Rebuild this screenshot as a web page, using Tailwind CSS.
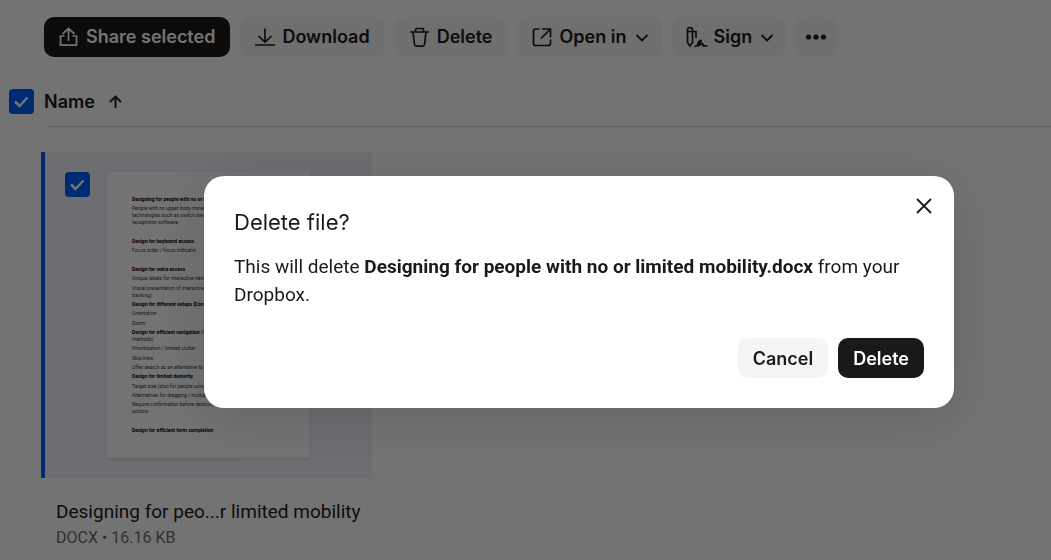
<!DOCTYPE html>
<html lang="en">
<head>
    <meta charset="UTF-8">
    <meta name="viewport" content="width=device-width, initial-scale=1.0">
    <title>Files - Dropbox</title>
    <script src="https://cdn.jsdelivr.net/npm/@tailwindcss/browser@4"></script>
</head>
<body class="bg-white font-['Roboto',sans-serif] text-[#1e1919] min-h-screen overflow-hidden">
    <!-- Toolbar -->
    <header class="flex gap-[10px] pt-[17px] pl-[44px] font-['Inter',sans-serif] text-[18px] leading-6 font-semibold whitespace-nowrap">
        <button class="flex items-center gap-[6px] h-10 pl-[14px] pr-[15px] rounded-[10px] bg-[#1a1918] text-white">
            <svg class="w-[22px] h-[22px]" viewBox="0 0 22 22" fill="none" stroke="currentColor" stroke-width="1.7">
                <path d="M6.500 10H2.500v9.200h16V10h-4M10.500 15V2.500M4.500 8l6-5.500 6 5.500"/>
            </svg>
            Share selected
        </button>
        <button class="flex items-center gap-[6px] h-10 pl-[14px] pr-[15px] rounded-[10px] bg-[#f5f5f6]">
            <svg class="w-[22px] h-[22px]" viewBox="0 0 22 22" fill="none" stroke="currentColor" stroke-width="1.7">
                <path d="M11 2.500V16M4.500 10l6.500 6 6.500-6M1 19h20"/>
            </svg>
            Download
        </button>
        <button class="flex items-center gap-[6px] h-10 pl-[14px] pr-[15px] rounded-[10px] bg-[#f5f5f6]">
            <svg class="w-[22px] h-[22px]" viewBox="0 0 22 22" fill="none" stroke="currentColor" stroke-width="1.7">
                <path d="M1 6h19M6.500 6V4q0-1.500 1.500-1.500h5Q14.500 2.500 14.500 4v2M4 6l1.500 12.500q.2 1.700 2 1.700h6q1.800 0 2-1.700L17 6"/>
            </svg>
            Delete
        </button>
        <button class="flex items-center gap-[6px] h-10 pl-[14px] pr-[10px] rounded-[10px] bg-[#f5f5f6]">
            <svg class="w-[22px] h-[22px]" viewBox="0 0 22 22" fill="none" stroke="currentColor" stroke-width="1.7">
                <path d="M8.500 3H4.500Q2.500 3 2.500 5v12.500q0 2 2 2h13q2 0 2-2V13.500M11 3h8.500v8.500M19 3.500L10 12.500"/>
            </svg>
            Open in
            <svg class="w-5 h-5" viewBox="0 0 20 20" fill="none" stroke="currentColor" stroke-width="1.8">
                <path d="M4.500 8l5.500 5.500L15.500 8"/>
            </svg>
        </button>
        <button class="flex items-center gap-[5px] h-10 pl-[14px] pr-[9px] rounded-[10px] bg-[#f5f5f6]">
            <svg class="w-[22px] h-[22px]" viewBox="0 0 22 22" fill="none" stroke="currentColor" stroke-width="1.7">
                <path d="M1.500 16.500V4Q1.500 1.500 4 1.500T6.500 4v12.500L4 20zM1.500 5.500H10V12M8.500 20.500c3-.5 7-4 6.500-6-1.500-1-4 3.500-3.200 5.200 1.200 1 3.200-2.700 4.700-2.200 1 .6-.5 1.500.5 2.200 1 .5 2.500 0 4.500.3"/>
            </svg>
            Sign
            <svg class="w-5 h-5" viewBox="0 0 20 20" fill="none" stroke="currentColor" stroke-width="1.8">
                <path d="M4.500 8l5.500 5.500L15.500 8"/>
            </svg>
        </button>
        <button class="flex items-center justify-center w-10 h-10 rounded-[10px] bg-[#f5f5f6]" aria-label="More">
            <svg class="w-[22px] h-[22px]" viewBox="0 0 22 22" fill="currentColor">
                <circle cx="3.500" cy="11" r="2.600"/><circle cx="11" cy="11" r="2.600"/><circle cx="18.500" cy="11" r="2.600"/>
            </svg>
        </button>
    </header>

    <main class="mt-8 pl-[9px]">
        <!-- Sort row -->
        <div class="flex items-center gap-[10px]">
            <div class="relative w-[25px] h-[25px]">
                <input type="checkbox" checked aria-label="Select all" class="appearance-none block w-[25px] h-[25px] rounded bg-[#0061fe]">
                <svg class="absolute inset-0 w-[25px] h-[25px] pointer-events-none" viewBox="0 0 25 25" fill="none" stroke="#fff" stroke-width="2.5">
                    <path d="M6 12.500l4.500 4.500 8-8.500"/>
                </svg>
            </div>
            <button class="flex items-center gap-[10px] text-[18px] leading-6 font-semibold font-['Inter',sans-serif]">
                Name
                <svg class="w-5 h-5" viewBox="0 0 20 20" fill="none" stroke="currentColor" stroke-width="1.9">
                    <path d="M10.500 16V5M5 10l5.500-5.500L16 10"/>
                </svg>
            </button>
        </div>
        <hr class="mt-3 ml-[38px] border-[#d5d3d0]">

        <!-- File card -->
        <article class="mt-[25px] ml-8 w-[331px]">
            <div class="relative flex justify-center py-5 border-l-4 border-[#0061fe] bg-[#eff4fb]">
                <div class="absolute left-5 top-5">
                    <input type="checkbox" checked aria-label="Select file" class="appearance-none block w-[25px] h-[25px] rounded bg-[#0061fe]">
                    <svg class="absolute inset-0 w-[25px] h-[25px] pointer-events-none" viewBox="0 0 25 25" fill="none" stroke="#fff" stroke-width="2.5">
                        <path d="M6 12.500l4.500 4.500 8-8.500"/>
                    </svg>
                </div>
                <div class="flex flex-col justify-between w-[203px] h-[286px] px-[25px] py-6 bg-white shadow-sm overflow-hidden whitespace-nowrap text-[5px] leading-[7px] text-[#333]">
                    <p class="font-bold text-black">Designing for people with no or limited mobility</p>
                    <p>People with no upper body movement may use<br>technologies such as switch devices and speech<br>recognition software.</p>
                    <p>&nbsp;</p>
                    <p class="font-bold text-black">Design for keyboard access</p>
                    <p>Focus order / focus indicator</p>
                    <p>&nbsp;</p>
                    <p class="font-bold text-black">Design for voice access</p>
                    <p>Unique labels for interactive items [Consider]</p>
                    <p>Visual presentation of interactive items (eye<br>tracking)</p>
                    <p class="font-bold text-black">Design for different setups [Consider]</p>
                    <p>Orientation</p>
                    <p>Zoom</p>
                    <p><b class="text-black">Design for efficient navigation</b> (for all<br>methods)</p>
                    <p>Prioritisation / limited clutter</p>
                    <p>Skip links</p>
                    <p>Offer search as an alternative to navigation</p>
                    <p class="font-bold text-black">Design for limited dexterity</p>
                    <p>Target size (also for people using eye</p>
                    <p>Alternatives for dragging / multiple points</p>
                    <p>Require confirmation before destructive<br>actions</p>
                    <p>&nbsp;</p>
                    <p class="font-bold text-black">Design for efficient form completion</p>
                </div>
            </div>
            <div class="pt-5 pl-[15px] whitespace-nowrap">
                <h2 class="text-[19px] leading-7">Designing for peo...r limited mobility</h2>
                <p class="text-[16px] leading-6 text-[#736c64]">DOCX • 16.16 KB</p>
            </div>
        </article>
    </main>

    <!-- Delete dialog -->
    <div class="fixed inset-0 flex items-start justify-end pt-[176px] pr-[97px] bg-black/55">
        <div role="dialog" aria-modal="true" aria-labelledby="dialogTitle" class="relative w-[750px] p-[30px] rounded-[20px] bg-white shadow-[0_10px_60px_rgba(0,0,0,0.15)]">
            <button class="absolute top-[18px] right-[18px] w-6 h-6" aria-label="Close">
                <svg class="w-6 h-6" viewBox="0 0 24 24" fill="none" stroke="currentColor" stroke-width="1.8">
                    <path d="M5 5l14 14M19 5L5 19"/>
                </svg>
            </button>
            <h1 id="dialogTitle" class="text-[22px] leading-8 font-['Inter',sans-serif]">Delete file?</h1>
            <p class="mt-[15px] text-[19px] leading-7">This will delete <b class="font-bold">Designing for people with no or limited mobility.docx</b> from your Dropbox.</p>
            <div class="flex justify-end gap-[10px] mt-[29px] font-['Inter',sans-serif] text-[18px] font-semibold">
                <button class="h-10 px-[15px] rounded-[10px] bg-[#f5f5f7]">Cancel</button>
                <button class="h-10 px-[15px] rounded-[10px] bg-[#1a1918] text-white">Delete</button>
            </div>
        </div>
    </div>
</body>
</html>
